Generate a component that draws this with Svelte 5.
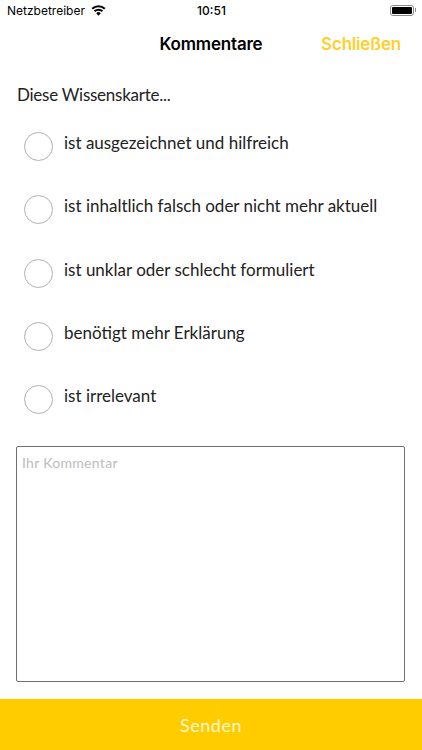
<script lang="ts">
	const options = [
		'ist ausgezeichnet und hilfreich',
		'ist inhaltlich falsch oder nicht mehr aktuell',
		'ist unklar oder schlecht formuliert',
		'benötigt mehr Erklärung',
		'ist irrelevant'
	];

	let selected = $state<number | null>(null);
	let comment = $state('');
</script>

<div class="screen">
	<div class="status">
		<div class="status__left">
			<span>Netzbetreiber</span>
			<svg class="status__wifi" viewBox="0 0 16 12" width="15" height="11" aria-hidden="true">
				<path d="M8 11.6 5.6 8.9a3.4 3.4 0 0 1 4.8 0Z" fill="#000" />
				<path d="M4.4 7.6 3 6a7.2 7.2 0 0 1 10 0l-1.4 1.6a5.2 5.2 0 0 0-7.2 0Z" fill="#000" />
				<path d="M1.9 4.8.4 3.2a11 11 0 0 1 15.2 0l-1.5 1.6a8.9 8.9 0 0 0-12.2 0Z" fill="#000" />
			</svg>
		</div>
		<span class="status__time">10:51</span>
		<div class="status__right">
			<span class="status__battery"><span></span></span>
			<span class="status__cap"></span>
		</div>
	</div>

	<header class="nav">
		<h1>Kommentare</h1>
		<button class="nav__close" type="button">Schließen</button>
	</header>

	<main class="body">
		<p class="lead">Diese Wissenskarte...</p>

		<div class="options">
			{#each options as option, i}
				<button class="option" type="button" onclick={() => (selected = i)}>
					<span class="option__radio" class:is-on={selected === i}></span>
					<span class="option__label">{option}</span>
				</button>
			{/each}
		</div>

		<textarea class="comment" placeholder="Ihr Kommentar" bind:value={comment}></textarea>
	</main>

	<button class="send" type="button">Senden</button>
</div>

<style>
	:global(body) {
		margin: 0;
		background: #fff;
	}

	.screen {
		display: flex;
		flex-direction: column;
		width: 422px;
		height: 750px;
		overflow: hidden;
		background: #fff;
		color: #222;
		font-family: Lato, "Noto Sans", sans-serif;
	}

	.status {
		display: grid;
		grid-template-columns: 1fr auto 1fr;
		align-items: center;
		height: 20px;
		padding: 0 6px 0 7px;
		font-family: Inter, "Liberation Sans", sans-serif;
		font-size: 12px;
		color: #000;
	}

	.status__left {
		display: flex;
		align-items: center;
		gap: 6px;
	}

	.status__wifi {
		display: block;
	}

	.status__time {
		font-weight: 500;
	}

	.status__right {
		display: flex;
		align-items: center;
		justify-content: flex-end;
	}

	.status__battery {
		display: block;
		box-sizing: border-box;
		width: 24px;
		height: 11px;
		padding: 1px;
		border: 1px solid #8a8a8a;
		border-radius: 3px;
	}

	.status__battery span {
		display: block;
		height: 100%;
		border-radius: 1px;
		background: #000;
	}

	.status__cap {
		width: 1px;
		height: 4px;
		margin-left: 1px;
		background: #8a8a8a;
	}

	.nav {
		position: relative;
		display: flex;
		align-items: center;
		justify-content: center;
		height: 47px;
	}

	.nav h1 {
		margin: 0;
		font-family: Inter, "Liberation Sans", sans-serif;
		font-size: 17px;
		font-weight: 600;
		letter-spacing: -0.2px;
		color: #000;
	}

	.nav__close {
		position: absolute;
		top: 50%;
		right: 21px;
		transform: translateY(-50%);
		padding: 0;
		border: 0;
		background: none;
		font-family: Inter, "Liberation Sans", sans-serif;
		font-size: 17px;
		font-weight: 600;
		letter-spacing: -0.2px;
		color: #ffd02b;
	}

	.body {
		display: flex;
		flex: 1;
		flex-direction: column;
		padding: 0 16px;
	}

	.lead {
		margin: 17px 0 0 1px;
		font-size: 17px;
		line-height: 22px;
		letter-spacing: -0.25px;
	}

	.options {
		display: grid;
		grid-auto-rows: 63.25px;
		margin-top: 14px;
		padding-left: 8px;
	}

	.option {
		display: flex;
		align-items: flex-start;
		gap: 11px;
		padding: 12px 0 0;
		border: 0;
		background: none;
		color: inherit;
		font: inherit;
		text-align: left;
	}

	.option__radio {
		flex: none;
		box-sizing: border-box;
		width: 29px;
		height: 29px;
		border: 1.5px solid #b0b0b0;
		border-radius: 50%;
	}

	.option__radio.is-on {
		background: #ffcc00;
	}

	.option__label {
		font-size: 17px;
		line-height: 22px;
	}

	.comment {
		box-sizing: border-box;
		width: 389px;
		height: 236px;
		margin: 10px 0 0;
		padding: 7px 5px;
		border: 1px solid #6f6f6f;
		border-radius: 2px;
		outline: none;
		resize: none;
		font-family: inherit;
		font-size: 14px;
		letter-spacing: 0.3px;
		color: #111;
	}

	.comment::placeholder {
		color: #bdbdbd;
		opacity: 1;
	}

	.send {
		flex: none;
		height: 51px;
		padding: 0;
		border: 0;
		background: #ffcc00;
		color: #fff7d0;
		font: inherit;
		font-size: 18px;
		letter-spacing: 0.5px;
	}
</style>
